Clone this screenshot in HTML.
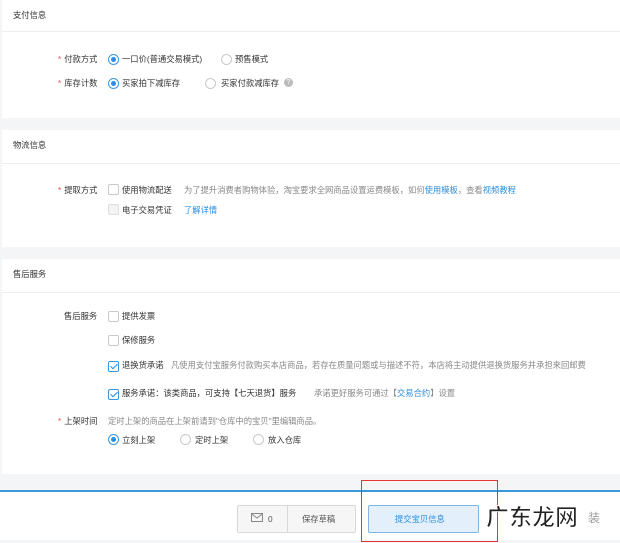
<!DOCTYPE html>
<html><head><meta charset="utf-8"><style>
*{margin:0;padding:0;box-sizing:border-box}
body{width:620px;height:543px;background:#f4f5f7;position:relative;overflow:hidden;font-family:"Liberation Sans","Noto Sans CJK SC",sans-serif;font-size:8.3px;color:#333}
.p{position:absolute;left:2px;right:0;background:#fff}
.h{position:absolute;left:0;right:0;border-bottom:1px solid #eceef0;height:32px;padding:9px 0 0 11px;font-size:8.3px;color:#333}
.a{position:absolute;white-space:nowrap;line-height:12px}
.s{color:#f04b4b;margin-right:3px}
.g{color:#888}
.b{color:#2a8ee0}
.r{position:absolute;width:11px;height:11px;border:1px solid #c9c9c9;border-radius:50%;background:#fff}
.r.on{border-color:#3b96e0}
.r.on::after{content:"";position:absolute;left:2px;top:2px;width:5px;height:5px;border-radius:50%;background:#2a8ee0}
.c{position:absolute;width:11px;height:11px;border:1px solid #c9c9c9;border-radius:2px;background:#fff}
.c.d{background:#f3f3f3;border-color:#ddd}
.c.on{border-color:#3b96e0}
.c.on::after{content:"";position:absolute;left:3px;top:0px;width:3px;height:6px;border:solid #2a8ee0;border-width:0 1.5px 1.5px 0;transform:rotate(45deg)}
</style></head><body>
<div class="p" style="top:0;height:118px"><div class="h" style="top:0">支付信息</div></div>
<div class="a" style="left:58px;top:53px"><span class="s">*</span>付款方式</div>
<div class="r on" style="left:108px;top:54px"></div><div class="a" style="left:122px;top:53px">一口价(普通交易模式)</div>
<div class="r" style="left:221px;top:54px"></div><div class="a" style="left:235px;top:53px">预售模式</div>
<div class="a" style="left:58px;top:77px"><span class="s">*</span>库存计数</div>
<div class="r on" style="left:108px;top:78px"></div><div class="a" style="left:122px;top:77px">买家拍下减库存</div>
<div class="r" style="left:205px;top:78px"></div><div class="a" style="left:221px;top:77px">买家付款减库存</div>
<div style="position:absolute;left:284px;top:78px;width:9px;height:9px;border-radius:50%;background:#bbb;color:#fff;font-size:7px;text-align:center;line-height:9px">?</div>

<div class="p" style="top:130px;height:117px"><div class="h" style="top:0;height:34px">物流信息</div></div>
<div class="a" style="left:58px;top:184px"><span class="s">*</span>提取方式</div>
<div class="c" style="left:108px;top:184px"></div><div class="a" style="left:122px;top:184px">使用物流配送</div>
<div class="a g" style="left:184px;top:184px">为了提升消费者购物体验，淘宝要求全网商品设置运费模板，如何<span class="b">使用模板</span>，查看<span class="b">视频教程</span></div>
<div class="c d" style="left:108px;top:204px"></div><div class="a" style="left:122px;top:204px">电子交易凭证</div>
<div class="a b" style="left:184px;top:204px">了解详情</div>

<div class="p" style="top:259px;height:215px"><div class="h" style="top:0;height:34px">售后服务</div></div>
<div class="a" style="left:64px;top:310px">售后服务</div>
<div class="c" style="left:108px;top:311px"></div><div class="a" style="left:122px;top:310px">提供发票</div>
<div class="c" style="left:108px;top:335px"></div><div class="a" style="left:122px;top:334px">保修服务</div>
<div class="c on" style="left:108px;top:361px"></div><div class="a" style="left:122px;top:359px">退换货承诺</div>
<div class="a g" style="left:171px;top:359px">凡使用支付宝服务付款购买本店商品，若存在质量问题或与描述不符，本店将主动提供退换货服务并承担来回邮费</div>
<div class="c on" style="left:108px;top:389px"></div><div class="a" style="left:122px;top:387px">服务承诺：该类商品，可支持【七天退货】服务</div>
<div class="a g" style="left:314px;top:387px">承诺更好服务可通过【<span class="b">交易合约</span>】设置</div>
<div class="a" style="left:58px;top:415px"><span class="s">*</span>上架时间</div>
<div class="a g" style="left:108px;top:415px">定时上架的商品在上架前请到"仓库中的宝贝"里编辑商品。</div>
<div class="r on" style="left:108px;top:434px"></div><div class="a" style="left:122px;top:434px">立刻上架</div>
<div class="r" style="left:180px;top:434px"></div><div class="a" style="left:195px;top:434px">定时上架</div>
<div class="r" style="left:253px;top:434px"></div><div class="a" style="left:268px;top:434px">放入仓库</div>

<div style="position:absolute;left:0;right:0;top:490px;height:2px;background:#3c97dd"></div>
<div style="position:absolute;left:0;right:0;top:492px;height:48px;background:#fff"></div>
<div style="position:absolute;left:237px;top:505px;width:119px;height:28px;border:1px solid #d8d8d8;border-radius:2px;background:#f6f6f6"></div>
<div style="position:absolute;left:287px;top:506px;width:1px;height:26px;background:#d8d8d8"></div>
<svg style="position:absolute;left:251px;top:513px" width="12" height="10" viewBox="0 0 12 10"><rect x="0.5" y="0.5" width="11" height="8" fill="none" stroke="#888"/><path d="M0.5 0.8 L6 5 L11.5 0.8" fill="none" stroke="#888"/></svg>
<div class="a" style="left:268px;top:513px;color:#555">0</div>
<div class="a" style="left:302px;top:513px;color:#555">保存草稿</div>
<div style="position:absolute;left:368px;top:505px;width:111px;height:28px;border:1px solid #7fb6e6;border-radius:2px;background:#e3f0fb"></div>
<div class="a" style="left:395px;top:513px;color:#2a8ee0">提交宝贝信息</div>
<div style="position:absolute;left:361px;top:480px;width:137px;height:62px;border:1.5px solid #e43535"></div>
<div class="a" style="left:486px;top:502px;font-size:23px;line-height:30px;color:#222;font-weight:bold;-webkit-text-stroke:1px #fff">广东龙网</div>
<div class="a" style="left:588px;top:512px;font-size:12px;color:#999">装</div>
</body></html>
